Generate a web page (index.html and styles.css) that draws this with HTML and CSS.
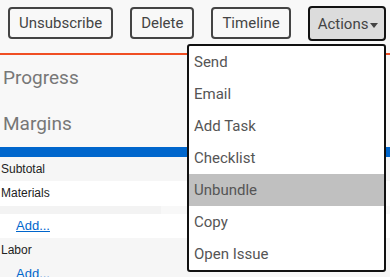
FILE: index.html
```html
<!DOCTYPE html>
<html lang="en">
<head>
    <meta charset="UTF-8">
    <meta name="viewport" content="width=device-width, initial-scale=1.0">
    <title>Job - Actions</title>
    <link rel="stylesheet" href="styles.css">
</head>
<body>
    <div id="toolbar">
        <button class="tool-btn">Unsubscribe</button>
        <button class="tool-btn">Delete</button>
        <button class="tool-btn">Timeline</button>
        <button class="tool-btn" id="actions-btn">Actions<span class="caret"></span></button>
    </div>

    <div id="content">
        <div class="section-title">Progress</div>
        <div class="section-title">Margins</div>
        <div class="bar"></div>

        <div class="row row-grey">Subtotal</div>
        <div class="row row-white">Materials</div>
        <div class="strip"></div>
        <div class="row row-white add-row"><a href="#">Add...</a></div>
        <div class="row row-grey">Labor</div>
        <div class="row row-grey add-row"><a href="#">Add...</a></div>
    </div>

    <!-- Actions dropdown, open -->
    <div id="actions-menu">
        <div class="menu-item">Send</div>
        <div class="menu-item">Email</div>
        <div class="menu-item">Add Task</div>
        <div class="menu-item">Checklist</div>
        <div class="menu-item active">Unbundle</div>
        <div class="menu-item">Copy</div>
        <div class="menu-item">Open Issue</div>
    </div>
</body>
</html>
```

FILE: styles.css
```css
body {
    margin: 0;
    padding: 0;
    background: #f8f8f8;
    font-family: Roboto, "Liberation Sans", sans-serif;
    overflow: hidden;
}

#toolbar {
    display: flex;
    align-items: flex-start;
    gap: 17px;
    padding: 7px 0 12px 8px;
    border-bottom: 2px solid #f04e23;
}

.tool-btn {
    height: 32px;
    padding: 0 9px;
    border: 2px solid #444;
    border-radius: 4px;
    background: #f8f8f8;
    color: #444;
    font-family: inherit;
    font-size: 15px;
    cursor: pointer;
}

#actions-btn {
    height: 35px;
    margin-top: -1px;
    padding: 0 6px 0 8px;
    background: #dcdcdc;
    border-color: #111;
    display: flex;
    align-items: center;
}

.caret {
    display: inline-block;
    margin: 3px 0 0 2px;
    border-left: 4px solid transparent;
    border-right: 4px solid transparent;
    border-top: 5px solid #444;
}

.section-title {
    height: 46px;
    line-height: 46px;
    padding-left: 3px;
    font-size: 19px;
    color: #777;
}

.bar {
    height: 10px;
    background: #0066cc;
}

.row {
    height: 24px;
    line-height: 24px;
    padding-left: 1px;
    font-family: "Liberation Sans", Arial, sans-serif;
    font-size: 12px;
    color: #222;
}

.row-grey {
    background: #f6f6f6;
}

.row-white {
    background: #fff;
    height: 25px;
    line-height: 25px;
}

.strip {
    width: 161px;
    height: 8px;
    background: #f3f3f3;
}

.add-row {
    height: 24px;
    line-height: 24px;
    padding-left: 16px;
    font-size: 13px;
}

.add-row a {
    color: #0066cc;
}

#actions-menu {
    position: absolute;
    top: 44px;
    left: 187px;
    width: 195px;
    background: #fff;
    border: 2px solid #111;
    border-radius: 3px;
}

.menu-item {
    height: 32px;
    line-height: 32px;
    padding-left: 5px;
    font-size: 15px;
    color: #555;
}

.menu-item.active {
    background: #c0c0c0;
}
```
